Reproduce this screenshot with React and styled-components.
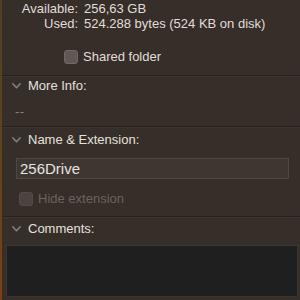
import React from 'react'
import styled, { createGlobalStyle } from 'styled-components'

const Global = createGlobalStyle`
    html, body {
        margin: 0;
        padding: 0;
        background: #362e29;
        width: 300px;
        height: 300px;
        overflow: hidden;
    }
    body {
        font-family: "Liberation Sans", Arial, sans-serif;
        font-size: 13px;
        color: #e2ddd9;
    }
`;

const Window = styled.div`
    display: flex;
    width: 300px;
    height: 300px;
    background: #362e29;
`;

const Edge = styled.div`
    width: 2px;
    flex: none;
    background: linear-gradient(#4e3f26, #5c4322 45%, #7a4018);
`;

const Panel = styled.div`
    flex: 1;
    display: flex;
    flex-direction: column;
    min-width: 0;
`;

const InfoGrid = styled.div`
    display: grid;
    grid-template-columns: 76px auto;
    column-gap: 6px;
    padding-top: 1px;
    line-height: 15px;
    white-space: nowrap;
`;

const Label = styled.span`
    text-align: right;
`;

const CheckRow = styled.div`
    display: flex;
    align-items: center;
    gap: ${p => p.$gap || 5}px;
    height: 14px;
    line-height: 14px;
    margin: ${p => p.$margin};
    padding-left: ${p => p.$left}px;
    color: ${p => p.$disabled ? '#6b635d' : '#e2ddd9'};
`;

const Box = styled.span`
    width: 14px;
    height: 14px;
    box-sizing: border-box;
    border-radius: 3px;
    flex: none;
    background: ${p => p.$disabled ? '#4a4340' : '#5f5855'};
    border: 1px solid ${p => p.$disabled ? '#524b47' : '#6f6864'};
`;

const Section = styled.div`
    border-top: 1px solid #28221e;
    box-shadow: inset 0 1px 0 #3d3530;
    padding-bottom: ${p => p.$pb || 0}px;
`;

const Header = styled.div`
    display: flex;
    align-items: center;
    gap: 7px;
    padding: ${p => p.$pt}px 0 0 10px;
    line-height: 15px;
    color: #e6e1dd;
`;

const Chevron = () => (
    <svg width="9" height="6" viewBox="0 0 9 6">
        <polyline points="0.8,0.8 4.5,4.8 8.2,0.8" fill="none" stroke="#8a837e" strokeWidth="1.4" strokeLinecap="round" strokeLinejoin="round" />
    </svg>
);

const Muted = styled.div`
    margin-top: 11px;
    padding-left: 13px;
    line-height: 15px;
    color: #8a837e;
    letter-spacing: 0.5px;
`;

const NameField = styled.div`
    margin: 11px 11px 0 14px;
    height: 21px;
    box-sizing: border-box;
    border: 1px solid #4e4742;
    background: #3d3631;
    padding-left: 3px;
    font-size: 15px;
    line-height: 19px;
    color: #e8e4e0;
`;

const CommentBox = styled.div`
    margin: 9px 2px 0 4px;
    height: 52px;
    box-sizing: border-box;
    background: #1f1f1f;
    border: 1px solid #3b3633;
`;

export default function App() {
    return (
        <Window>
            <Global />
            <Edge />
            <Panel>
                <InfoGrid>
                    <Label>Available:</Label>
                    <span>256,63 GB</span>
                    <Label>Used:</Label>
                    <span>524.288 bytes (524 KB on disk)</span>
                </InfoGrid>
                <CheckRow $left={62} $margin="19px 0 11px 0">
                    <Box />
                    <span>Shared folder</span>
                </CheckRow>
                <Section $pb={7}>
                    <Header $pt={2}><Chevron />More Info:</Header>
                    <Muted>--</Muted>
                </Section>
                <Section $pb={10}>
                    <Header $pt={5}><Chevron />Name &amp; Extension:</Header>
                    <NameField>256Drive</NameField>
                    <CheckRow $left={17} $margin="13px 0 0 0" $disabled>
                        <Box $disabled />
                        <span>Hide extension</span>
                    </CheckRow>
                </Section>
                <Section>
                    <Header $pt={4}><Chevron />Comments:</Header>
                    <CommentBox />
                </Section>
            </Panel>
        </Window>
    )
}
